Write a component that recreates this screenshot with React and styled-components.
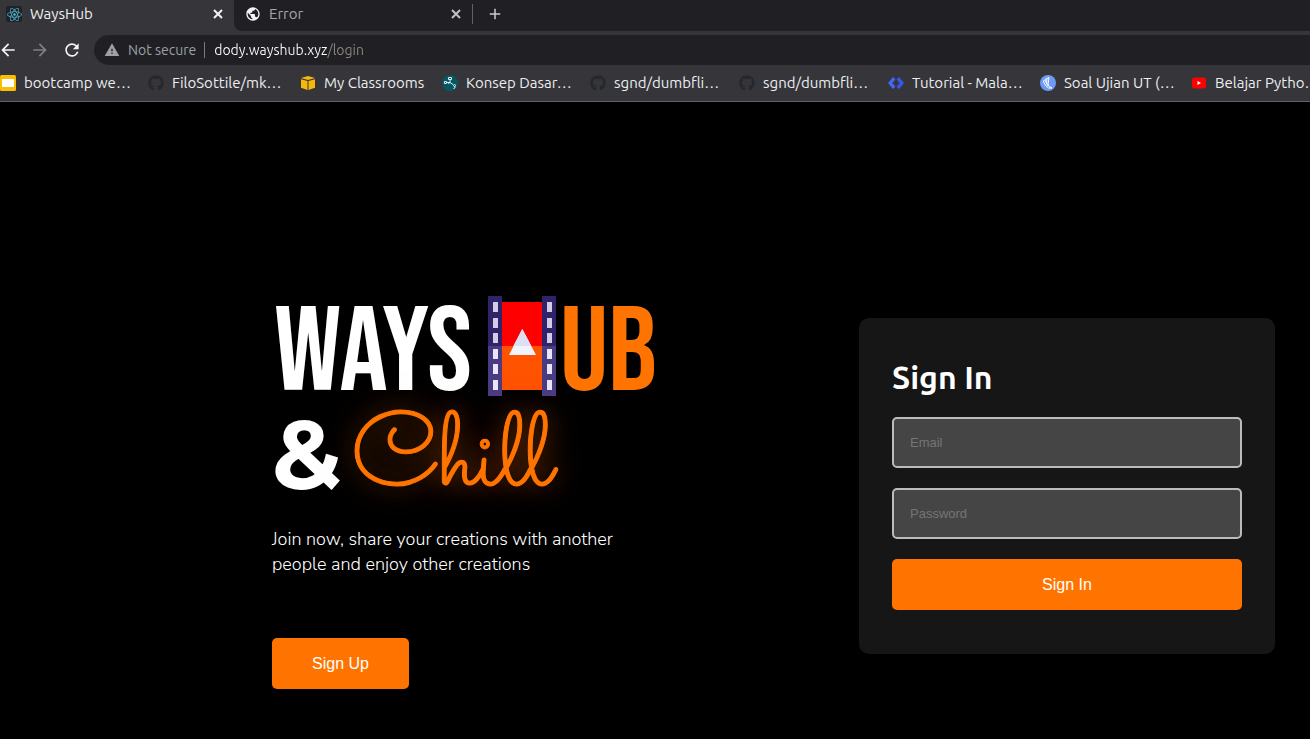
import React from 'react';
import styled, { createGlobalStyle } from 'styled-components';
import { FaReact, FaGithub } from 'react-icons/fa';
import { MdArrowBack, MdArrowForward, MdRefresh, MdWarning, MdAdd, MdPublic } from 'react-icons/md';

const GlobalStyle = createGlobalStyle`
  *, *::before, *::after { box-sizing: border-box; }
  html, body, #root { height: 100%; }
  body {
    margin: 0;
    background: #000;
    color: #fff;
    font-family: Ubuntu, "Noto Sans", sans-serif;
  }
`;

const Screen = styled.div`
  min-height: 100%;
  display: flex;
  flex-direction: column;
`;

const Chrome = styled.header`
  background: #36353a;
  border-bottom: 1px solid #5f6165;
  overflow: hidden;
`;

const TabStrip = styled.div`
  display: flex;
`;

const Tab = styled.div`
  display: flex;
  align-items: center;
  gap: 8px;
  flex: none;
  width: ${(p) => (p.$active ? 234 : 238)}px;
  height: 31px;
  padding: 0 8px 3px ${(p) => (p.$active ? 6 : 11)}px;
  font-size: 15px;
  line-height: 20px;
  color: ${(p) => (p.$active ? '#eef0f2' : '#a6a8ac')};
`;

const TabTitle = styled.span`
  flex: 1;
`;

const TabRest = styled.div`
  display: flex;
  flex: 1;
  background: #202024;
  border-bottom-left-radius: 8px;
`;

const Divider = styled.span`
  flex: none;
  width: 1px;
  height: 20px;
  margin-top: 4px;
  background: #5f6165;
`;

const IconButton = styled.button`
  display: grid;
  place-items: center;
  flex: none;
  width: ${(p) => p.$size || 20}px;
  height: ${(p) => p.$size || 20}px;
  padding: 0;
  border: 0;
  background: none;
  color: ${(p) => p.$color || '#f1f3f4'};
  cursor: pointer;
`;

const NewTab = styled(IconButton)`
  margin: 4px 12px;
`;

const Toolbar = styled.div`
  display: flex;
  align-items: center;
  gap: 12px;
  height: 34px;
  padding-top: 4px;
`;

const NavButtons = styled.nav`
  display: flex;
  gap: 12px;
  margin-left: -2px;
`;

const Address = styled.form`
  flex: 1;
  display: flex;
  align-items: center;
  height: 30px;
  padding-left: 10px;
  border-radius: 15px 0 0 15px;
  background: #202024;
  color: #9aa0a6;
  font-size: 14px;
  line-height: 20px;
`;

const Security = styled.span`
  margin: 0 8px;
`;

const AddressRule = styled.span`
  width: 1px;
  height: 16px;
  margin-right: 9px;
  background: #777a7e;
`;

const UrlInput = styled.input`
  flex: 1;
  min-width: 0;
  height: 24px;
  padding: 0;
  border: 0;
  outline: 0;
  font: 14px/24px Ubuntu, "Noto Sans", sans-serif;
  background: linear-gradient(90deg, #fff 113px, #8f8780 113px);
  background-clip: text;
  -webkit-background-clip: text;
  color: transparent;
`;

const Bookmarks = styled.nav`
  display: flex;
  align-items: center;
  height: 36px;
  gap: 16px;
  white-space: nowrap;
`;

const Bookmark = styled.a`
  display: flex;
  align-items: center;
  flex: none;
  gap: 8px;
  width: ${(p) => p.$width}px;
  color: #eceef0;
  font-size: 15px;
  line-height: 20px;
  text-decoration: none;
  svg { flex: none; }
`;

const Main = styled.main`
  flex: 1;
  display: flex;
  justify-content: space-between;
  align-items: center;
  flex-wrap: wrap;
  align-content: flex-start;
  gap: 32px;
  padding: 181px 35px 48px 272px;
`;

const Hero = styled.section`
  padding-top: 13px;
`;

const Brand = styled.h1`
  margin: 0;
  font-size: 120px;
  font-weight: 400;
  white-space: nowrap;
`;

const BrandRow = styled.span`
  display: flex;
  align-items: center;
  height: ${(p) => p.$height}px;
  line-height: 84px;
`;

const Narrow = styled.span`
  width: ${(p) => p.$width}px;
  padding-top: 16px;
  text-align: ${(p) => p.$align || 'left'};
  font-family: "Bebas Neue", "Oswald", "Liberation Sans Narrow", sans-serif;
  color: ${(p) => p.$color || '#fff'};
`;

const Film = styled.svg`
  flex: none;
  margin: 0 4px 0 16px;
`;

const Ampersand = styled.span`
  width: 80px;
  font: 700 96px/110px Montserrat, Lato, sans-serif;
`;

const Neon = styled.em`
  padding-top: 16px;
  font: normal 400 104px/102px Sacramento, Lato, sans-serif;
  color: #ff7400;
  -webkit-text-stroke: 1px #ff7400;
  text-shadow: 0 0 24px rgba(255, 116, 0, 0.4), 0 0 40px rgba(255, 116, 0, 0.4);
`;

const Tagline = styled.p`
  width: 360px;
  margin: 13px 0 61px;
  font: 300 18px/25px "Nunito Sans", Nunito, Lato, sans-serif;
`;

const Button = styled.button`
  display: block;
  width: ${(p) => p.$width || '100%'};
  height: 51px;
  border: 0;
  border-radius: 5px;
  background: #ff7400;
  color: #fff;
  font: 16px "Liberation Sans", Arial, sans-serif;
  cursor: pointer;
`;

const Card = styled.form`
  width: 416px;
  padding: 40px 33px 44px;
  border-radius: 10px;
  background: #161616;
`;

const CardTitle = styled.h2`
  margin: 0 0 20px;
  font-size: 32px;
  line-height: 39px;
  font-weight: 700;
`;

const Field = styled.input`
  display: block;
  width: 100%;
  height: 51px;
  margin-bottom: 20px;
  padding: 0 16px;
  border: 2px solid #bcbcbc;
  border-radius: 5px;
  background: #454545;
  color: #fff;
  font: 13px "Liberation Sans", Arial, sans-serif;
  &::placeholder { color: #757575; opacity: 1; }
`;

const CloseIcon = () => (
  <svg width="16" height="16" viewBox="0 0 16 16" fill="none" stroke="currentColor" strokeWidth="2">
    <path d="M4 4l8 8M12 4l-8 8" />
  </svg>
);

const SlidesIcon = () => (
  <svg width="16" height="16" viewBox="0 0 16 16">
    <rect width="16" height="16" rx="1.5" fill="#fbbc04" />
    <rect x="2" y="4" width="12" height="8" fill="#fff" />
  </svg>
);

const ReactBadge = () => (
  <svg width="16" height="16" viewBox="0 0 16 16">
    <rect width="16" height="16" rx="2" fill="#202326" />
    <FaReact x="1" y="1" width="14" height="14" color="#4fb6d2" />
  </svg>
);

const CubeIcon = () => (
  <svg width="16" height="16" viewBox="0 0 16 16">
    <path d="M1 3 8 1l7 2-7 2Z" fill="#f5b90b" />
    <path d="M1 4.2 7.5 6v9L1 12.8ZM15 4.2 8.5 6v9l6.500-2.200Z" fill="#f5b90b" />
  </svg>
);

const NetworkIcon = () => (
  <svg width="16" height="16" viewBox="0 0 16 16" fill="none" stroke="#dceff2">
    <circle cx="8" cy="8" r="8" fill="#075763" stroke="none" />
    <path d="M6.500 2.500h3v2h-3ZM2.500 6.500h2v2h-2ZM8 4.500v3M4.500 7.500H8l3 2M8 7.500l-2 1" />
    <circle cx="12.500" cy="10.500" r="1" />
    <path d="M13 11.500q.5 2-1.500 2" />
  </svg>
);

const CodeIcon = () => (
  <svg width="16" height="16" viewBox="0 0 16 16" fill="none" strokeWidth="3.400">
    <path d="M6.200 3.200 2.200 8l4 4.800" stroke="#3f66f6" />
    <path d="M9.800 3.200l4 4.800-4 4.800" stroke="#3358ec" />
  </svg>
);

const LeafIcon = () => (
  <svg width="16" height="16" viewBox="0 0 16 16" fill="none" stroke="#fff">
    <circle cx="8" cy="8" r="8" fill="#6b9bf7" stroke="none" />
    <path d="M9 2.500Q3 5 3.500 7L6 11q2 3 6 2-4-1-4-4L9 2.500M5 5l3 6M7 3.500 6.500 9" />
  </svg>
);

const YoutubeIcon = () => (
  <svg width="16" height="16" viewBox="0 0 16 16">
    <rect x="1" y="2.500" width="14" height="11" rx="2.500" fill="#f00" />
    <path d="M6.500 6v4L10 8Z" fill="#fff" />
  </svg>
);

const GithubIcon = () => <FaGithub size={16} color="#24292e" />;

const bookmarks = [
  { label: 'bootcamp we…', Icon: SlidesIcon, width: 132 },
  { label: 'FiloSottile/mk…', Icon: GithubIcon, width: 136 },
  { label: 'My Classrooms', Icon: CubeIcon, width: 126 },
  { label: 'Konsep Dasar…', Icon: NetworkIcon, width: 132 },
  { label: 'sgnd/dumbfli…', Icon: GithubIcon, width: 133 },
  { label: 'sgnd/dumbfli…', Icon: GithubIcon, width: 133 },
  { label: 'Tutorial - Mala…', Icon: CodeIcon, width: 136 },
  { label: 'Soal Ujian UT (…', Icon: LeafIcon, width: 135 },
  { label: 'Belajar Pytho…', Icon: YoutubeIcon, width: 136 },
];

const holes = [6, 22, 37, 53, 68, 84];

const FilmIcon = () => (
  <Film width="68" height="100" viewBox="0 0 68 100" aria-label="H" role="img">
    <rect x="14" y="6" width="41" height="44" fill="#f00" />
    <rect x="14" y="50" width="41" height="44" fill="#ff5300" />
    {[0, 54].map((x) => (
      <g key={x}>
        <rect x={x} width="14" height="50" fill="#31226a" />
        <rect x={x} y="50" width="14" height="50" fill="#4b3b83" />
        {holes.map((y) => (
          <rect key={y} x={x + 5} y={y} width="5" height="10" fill={y < 50 ? '#cfcee6' : '#e4e8f7'} />
        ))}
      </g>
    ))}
    <path d="M34.300 33 48 59H21Z" fill="#eff3fc" />
    <path d="M34.300 33 43.300 50H25.300Z" fill="#dddff2" />
  </Film>
);

export default function App() {
  const stop = (e) => e.preventDefault();
  return (
    <Screen>
      <GlobalStyle />
      <Chrome>
        <TabStrip>
          <Tab $active>
            <ReactBadge />
            <TabTitle>WaysHub</TabTitle>
            <IconButton $size={16} aria-label="Close WaysHub"><CloseIcon /></IconButton>
          </Tab>
          <TabRest>
            <Tab>
              <MdPublic size={16} color="#f1f3f4" />
              <TabTitle>Error</TabTitle>
              <IconButton $size={16} $color="#bdc1c6" aria-label="Close Error"><CloseIcon /></IconButton>
            </Tab>
            <Divider />
            <NewTab $color="#c8cbcf" aria-label="New tab"><MdAdd size={18} /></NewTab>
          </TabRest>
        </TabStrip>
        <Toolbar>
          <NavButtons>
            <IconButton aria-label="Back"><MdArrowBack size={20} /></IconButton>
            <IconButton $color="#7f8185" aria-label="Forward"><MdArrowForward size={20} /></IconButton>
            <IconButton aria-label="Reload"><MdRefresh size={20} /></IconButton>
          </NavButtons>
          <Address onSubmit={stop}>
            <MdWarning size={16} />
            <Security>Not secure</Security>
            <AddressRule />
            <UrlInput aria-label="Address" defaultValue="dody.wayshub.xyz/login" />
          </Address>
        </Toolbar>
        <Bookmarks aria-label="Bookmarks">
          {bookmarks.map(({ label, Icon, width }, i) => (
            <Bookmark key={i} href="#" $width={width}>
              <Icon />
              {label}
            </Bookmark>
          ))}
        </Bookmarks>
      </Chrome>
      <Main>
        <Hero>
          <Brand>
            <BrandRow $height={100}>
              <Narrow $width={200} $align="right">WAYS</Narrow>
              <FilmIcon />
              <Narrow $width={100} $color="#ff7400">UB</Narrow>
            </BrandRow>
            <BrandRow $height={118}>
              <Ampersand>&amp;</Ampersand>
              <Neon>Chill</Neon>
            </BrandRow>
          </Brand>
          <Tagline>Join now, share your creations with another people and enjoy other creations</Tagline>
          <Button type="button" $width="137px">Sign Up</Button>
        </Hero>
        <Card onSubmit={stop}>
          <CardTitle>Sign In</CardTitle>
          <Field type="email" placeholder="Email" aria-label="Email" />
          <Field type="password" placeholder="Password" aria-label="Password" />
          <Button type="submit">Sign In</Button>
        </Card>
      </Main>
    </Screen>
  );
}
